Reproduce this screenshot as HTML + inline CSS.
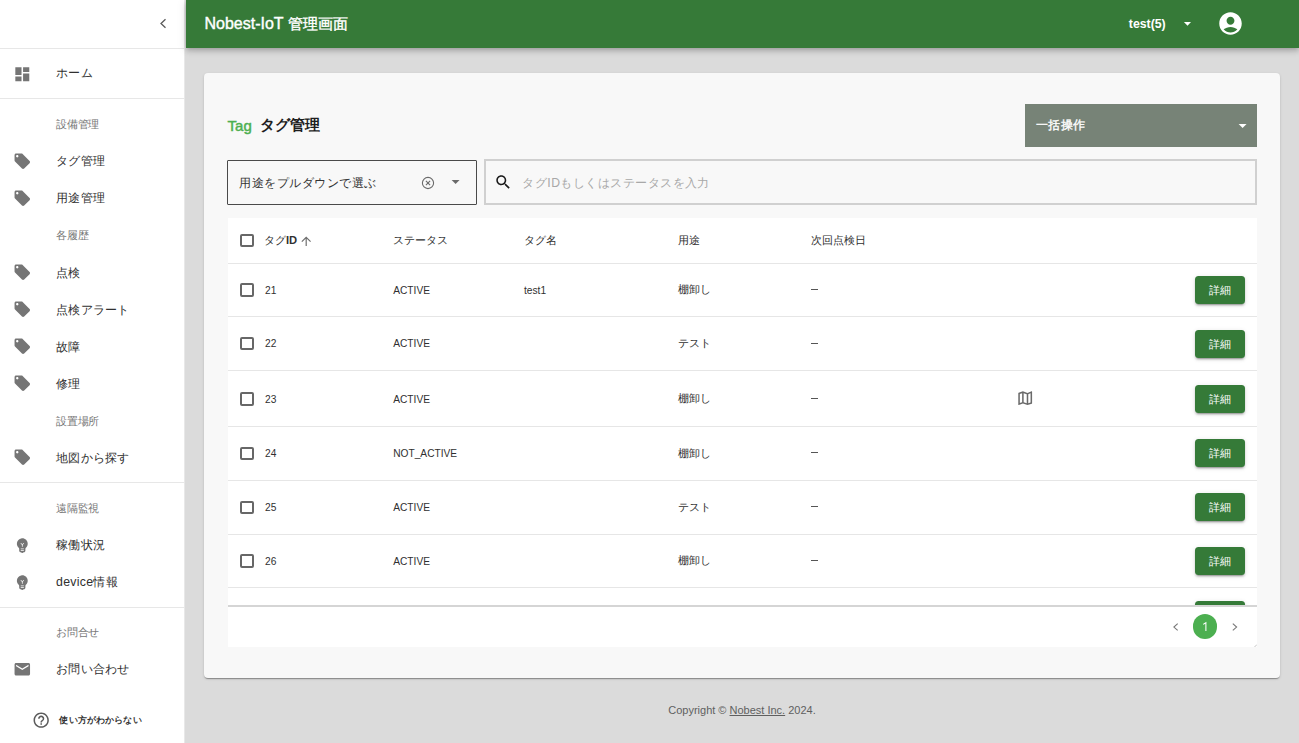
<!DOCTYPE html>
<html><head><meta charset="utf-8">
<style>
*{box-sizing:border-box;margin:0;padding:0}
html,body{width:1299px;height:743px;overflow:hidden}
body{background:#dbdbdb;font-family:"Liberation Sans",sans-serif;position:relative;color:#222}
div,span,svg{position:absolute}
svg{display:block}
#side{left:0;top:0;width:185.3px;height:743px;background:#fff;border-right:0.6px solid #e8e8e8}
.hr{left:0;width:185px;height:1px;background:#e7e7e7}
.it{left:56px;font-size:12.3px;letter-spacing:0.3px;line-height:16px;height:16px;white-space:nowrap;color:#303030}
.sub{left:56.3px;font-size:11.2px;letter-spacing:-0.3px;line-height:14px;height:14px;white-space:nowrap;color:#777}
.ico{left:12.8px;width:18.6px;height:18.6px;fill:#757575}
#hdr{left:185.6px;top:0;width:1113.4px;height:48px;background:#367a38;box-shadow:0 2px 4px -1px rgba(0,0,0,.16),0 4px 5px 0 rgba(0,0,0,.1),0 1px 10px 0 rgba(0,0,0,.1)}
#card{left:204px;top:73px;width:1076px;height:605px;background:#f8f8f8;border-radius:4px;box-shadow:0 2px 1px -1px rgba(0,0,0,.2),0 1px 1px 0 rgba(0,0,0,.14),0 1px 3px 0 rgba(0,0,0,.12)}
#tbl{left:227.7px;top:218px;width:1029.3px;height:428.7px;background:#fff;overflow:hidden}
.th{font-size:11.2px;line-height:14px;height:14px;white-space:nowrap;color:#303030}
.l{font-size:10.2px !important}
.td{font-size:11.2px;line-height:14px;height:14px;white-space:nowrap;color:#303030}
.rl{left:0;width:1029px;height:1px;background:#e6e6e6}
.cb{width:13.6px;height:13.6px;border:2px solid #676767;border-radius:2px}
.btn{left:967.3px;width:50px;height:28px;background:#357a38;border-radius:3.5px;box-shadow:0 3px 1px -2px rgba(0,0,0,.2),0 2px 2px 0 rgba(0,0,0,.14),0 1px 5px 0 rgba(0,0,0,.12);color:#fff;font-size:10.8px;line-height:28px;text-align:center}
</style></head><body>

<!-- Sidebar -->
<div id="side">
  <svg style="left:159px;top:18px;width:9px;height:11px" viewBox="0 0 9 11"><polyline points="6.5,1.2 2,5.5 6.5,9.8" fill="none" stroke="#5a5a5a" stroke-width="1.3"/></svg>
  <div class="hr" style="top:48px"></div>
  <svg class="ico" style="top:64.7px" viewBox="0 0 24 24"><path d="M3 13h8V3H3v10zm0 8h8v-6H3v6zm10 0h8V11h-8v10zm0-18v6h8V3h-8z"/></svg>
  <div class="it" style="top:65.3px">ホーム</div>
  <div class="hr" style="top:98.2px"></div>

  <div class="sub" style="top:116.5px">設備管理</div>
  <svg class="ico" style="top:152px" viewBox="0 0 24 24"><path d="M21.41 11.58l-9-9C12.05 2.22 11.55 2 11 2H4c-1.1 0-2 .9-2 2v7c0 .55.22 1.05.59 1.42l9 9c.36.36.86.58 1.41.58.55 0 1.05-.22 1.41-.59l7-7c.37-.36.59-.86.59-1.41 0-.55-.23-1.06-.59-1.42zM5.5 7C4.67 7 4 6.33 4 5.5S4.67 4 5.5 4 7 4.67 7 5.5 6.33 7 5.5 7z"/></svg>
  <div class="it" style="top:152.9px">タグ管理</div>
  <svg class="ico" style="top:188.6px" viewBox="0 0 24 24"><path d="M21.41 11.58l-9-9C12.050 2.22 11.55 2 11 2H4c-1.1 0-2 .9-2 2v7c0 .55.22 1.05.59 1.42l9 9c.36.36.86.58 1.41.58.55 0 1.05-.22 1.41-.59l7-7c.37-.36.59-.86.59-1.41 0-.55-.23-1.060-.59-1.42zM5.5 7C4.67 7 4 6.33 4 5.5S4.67 4 5.5 4 7 4.670 7 5.5 6.33 7 5.5 7z"/></svg>
  <div class="it" style="top:190.1px">用途管理</div>

  <div class="sub" style="top:228.2px">各履歴</div>
  <svg class="ico" style="top:262.8px" viewBox="0 0 24 24"><path d="M21.41 11.58l-9-9C12.05 2.22 11.55 2 11 2H4c-1.1 0-2 .9-2 2v7c0 .55.22 1.05.59 1.42l9 9c.36.36.86.58 1.41.58.55 0 1.05-.22 1.41-.59l7-7c.37-.36.59-.86.59-1.41 0-.55-.23-1.06-.59-1.42zM5.5 7C4.67 7 4 6.33 4 5.5S4.67 4 5.5 4 7 4.67 7 5.5 6.33 7 5.5 7z"/></svg>
  <div class="it" style="top:264.5px">点検</div>
  <svg class="ico" style="top:299.9px" viewBox="0 0 24 24"><path d="M21.41 11.58l-9-9C12.05 2.22 11.55 2 11 2H4c-1.1 0-2 .9-2 2v7c0 .55.22 1.05.59 1.42l9 9c.36.36.86.58 1.41.58.55 0 1.05-.22 1.41-.59l7-7c.37-.36.59-.86.59-1.41 0-.55-.23-1.06-.59-1.42zM5.5 7C4.67 7 4 6.33 4 5.5S4.67 4 5.5 4 7 4.67 7 5.5 6.33 7 5.5 7z"/></svg>
  <div class="it" style="top:301.5px">点検アラート</div>
  <svg class="ico" style="top:337px" viewBox="0 0 24 24"><path d="M21.41 11.58l-9-9C12.05 2.22 11.55 2 11 2H4c-1.1 0-2 .9-2 2v7c0 .55.22 1.05.59 1.42l9 9c.36.36.86.58 1.41.58.55 0 1.05-.22 1.41-.59l7-7c.37-.36.59-.86.59-1.41 0-.55-.23-1.06-.59-1.42zM5.5 7C4.67 7 4 6.33 4 5.5S4.67 4 5.5 4 7 4.67 7 5.5 6.33 7 5.5 7z"/></svg>
  <div class="it" style="top:338.7px">故障</div>
  <svg class="ico" style="top:374px" viewBox="0 0 24 24"><path d="M21.41 11.58l-9-9C12.05 2.22 11.55 2 11 2H4c-1.1 0-2 .9-2 2v7c0 .55.22 1.05.59 1.42l9 9c.36.36.86.58 1.41.58.55 0 1.05-.22 1.41-.59l7-7c.37-.36.59-.86.59-1.41 0-.55-.23-1.06-.59-1.42zM5.5 7C4.67 7 4 6.33 4 5.5S4.67 4 5.5 4 7 4.67 7 5.5 6.33 7 5.5 7z"/></svg>
  <div class="it" style="top:375.6px">修理</div>

  <div class="sub" style="top:413.5px">設置場所</div>
  <svg class="ico" style="top:448px" viewBox="0 0 24 24"><path d="M21.41 11.58l-9-9C12.05 2.22 11.55 2 11 2H4c-1.1 0-2 .9-2 2v7c0 .55.22 1.05.59 1.42l9 9c.36.36.86.58 1.41.58.55 0 1.05-.22 1.41-.59l7-7c.37-.36.59-.86.59-1.41 0-.55-.23-1.06-.59-1.42zM5.5 7C4.67 7 4 6.33 4 5.5S4.67 4 5.5 4 7 4.67 7 5.5 6.33 7 5.5 7z"/></svg>
  <div class="it" style="top:449.6px">地図から探す</div>
  <div class="hr" style="top:482px"></div>

  <div class="sub" style="top:500.9px">遠隔監視</div>
  <svg class="ico" style="top:535.6px" viewBox="0 0 24 24"><path d="M12 3c-.46 0-.93.04-1.4.14-2.76.53-4.96 2.76-5.48 5.52-.48 2.61.48 5.01 2.22 6.56.43.38.66.91.66 1.47V19c0 1.1.9 2 2 2h.28c.35.6.98 1 1.72 1s1.38-.4 1.72-1H14c1.1 0 2-.9 2-2v-2.31c0-.55.22-1.09.64-1.46C18.090 13.95 19 12.08 19 10c0-3.87-3.13-7-7-7zm2 16h-4v-1h4v1zm0-2h-4v-1h4v1zm-1.5-5.59V14h-1v-2.59L9.67 9.59l.71-.71L12 10.5l1.62-1.62.71.71-1.83 1.82z"/></svg>
  <div class="it" style="top:537px">稼働状況</div>
  <svg class="ico" style="top:572.7px" viewBox="0 0 24 24"><path d="M12 3c-.46 0-.93.04-1.4.14-2.76.53-4.96 2.76-5.48 5.52-.48 2.61.48 5.01 2.22 6.56.43.38.66.91.66 1.47V19c0 1.1.9 2 2 2h.28c.35.6.98 1 1.72 1s1.38-.4 1.72-1H14c1.1 0 2-.9 2-2v-2.31c0-.55.22-1.09.64-1.46C18.09 13.95 19 12.08 19 10c0-3.87-3.13-7-7-7zm2 16h-4v-1h4v1zm0-2h-4v-1h4v1zm-1.5-5.590V14h-1v-2.59L9.67 9.59l.71-.71L12 10.5l1.62-1.62.71.71-1.83 1.82z"/></svg>
  <div class="it" style="top:574.1px">device情報</div>
  <div class="hr" style="top:606.6px"></div>

  <div class="sub" style="top:625.0px">お問合せ</div>
  <svg class="ico" style="top:659.8px" viewBox="0 0 24 24"><path d="M20 4H4c-1.1 0-1.99.9-1.99 2L2 18c0 1.1.9 2 2 2h16c1.1 0 2-.9 2-2V6c0-1.1-.9-2-2-2zm0 4l-8 5-8-5V6l8 5 8-5v2z"/></svg>
  <div class="it" style="top:660.7px">お問い合わせ</div>

  <svg style="left:31.6px;top:711px;width:18.4px;height:18.4px;fill:#5c5c5c" viewBox="0 0 24 24"><path d="M11 18h2v-2h-2v2zm1-16C6.48 2 2 6.48 2 12s4.48 10 10 10 10-4.48 10-10S17.52 2 12 2zm0 18c-4.41 0-8-3.59-8-8s3.59-8 8-8 8 3.59 8 8-3.59 8-8 8zm0-14c-2.21 0-4 1.79-4 4h2c0-1.1.9-2 2-2s2 .9 2 2c0 2-3 1.75-3 5h2c0-2.25 3-2.5 3-5 0-2.21-1.79-4-4-4z"/></svg>
  <div style="left:59.4px;top:714.3px;letter-spacing:0.15px;font-size:8.8px;line-height:12px;font-weight:bold;color:#333;white-space:nowrap">使い方がわからない</div>
</div>

<!-- Header -->
<div id="hdr">
  <div style="left:18.9px;top:14px;font-size:16px;line-height:20px;color:#fff;white-space:nowrap;-webkit-text-stroke:0.4px #fff">Nobest-IoT <span style="position:static;font-size:15.2px">管理画面</span></div>
  <div style="left:943.2px;top:16.3px;font-size:12.3px;line-height:16px;font-weight:bold;color:#fff;white-space:nowrap">test(5)</div>
  <svg style="left:993.2px;top:14.9px;width:17px;height:17px;fill:#fff" viewBox="0 0 24 24"><path d="M7 10l5 5 5-5z"/></svg>
  <svg style="left:1031.5px;top:9.8px;width:27px;height:27px;fill:#fff" viewBox="0 0 24 24"><path d="M12 2C6.48 2 2 6.48 2 12s4.48 10 10 10 10-4.48 10-10S17.52 2 12 2zm0 4c1.93 0 3.5 1.57 3.5 3.5S13.93 13 12 13s-3.5-1.570-3.5-3.5S10.07 6 12 6zm0 14c-2.03 0-4.43-.82-6.14-2.88C7.55 15.8 9.68 15 12 15s4.45.8 6.14 2.12C16.43 19.18 14.03 20 12 20z"/></svg>
</div>

<!-- Card -->
<div id="card">
  <div style="left:23.6px;top:43.2px;font-size:15px;line-height:20px;color:#4caf50;white-space:nowrap;-webkit-text-stroke:0.45px #4caf50">Tag</div>
  <div style="left:56px;top:42px;font-size:15px;line-height:20px;font-weight:bold;color:#1e1e1e;white-space:nowrap">タグ管理</div>

  <div style="left:821px;top:31px;width:232px;height:43px;background:#778377">
    <div style="left:10.6px;top:13px;font-size:12.4px;letter-spacing:0.5px;line-height:16px;color:#fff;white-space:nowrap;-webkit-text-stroke:0.35px #fff">一括操作</div>
    <svg style="left:207.5px;top:12px;width:19.2px;height:19.2px;fill:#fff" viewBox="0 0 24 24"><path d="M7 10l5 5 5-5z"/></svg>
  </div>

  <div style="left:23px;top:86.9px;width:249.5px;height:45px;border:1.3px solid #4a4a4a;border-radius:1px">
    <div style="left:11px;top:13.7px;font-size:12.2px;letter-spacing:0.55px;line-height:16px;color:#333;white-space:nowrap">用途をプルダウンで選ぶ</div>
    <svg style="left:192px;top:14.2px;width:16px;height:16px" viewBox="0 0 16 16"><circle cx="8" cy="8" r="5.6" fill="none" stroke="#6a6a6a" stroke-width="1.1"/><path d="M5.9 5.9l4.2 4.2M10.1 5.9l-4.2 4.2" stroke="#6a6a6a" stroke-width="1.1"/></svg>
    <svg style="left:218.3px;top:11.6px;width:19.2px;height:19.2px;fill:#6a6a6a" viewBox="0 0 24 24"><path d="M7 10l5 5 5-5z"/></svg>
  </div>

  <div style="left:280px;top:85.8px;width:773px;height:46.7px;border:2px solid #d0d0d0">
    <svg style="left:7.5px;top:12.7px;width:18.4px;height:18.4px;fill:#1a1a1a" viewBox="0 0 24 24"><path d="M15.5 14h-.79l-.28-.27C15.41 12.59 16 11.11 16 9.5 16 5.91 13.09 3 9.5 3S3 5.91 3 9.5 5.91 16 9.5 16c1.61 0 3.09-.59 4.23-1.57l.27.28v.79l5 4.99L20.49 19l-4.99-5zm-6 0C7.01 14 5 11.99 5 9.5S7.01 5 9.5 5 14 7.01 14 9.5 11.99 14 9.5 14z"/></svg>
    <div style="left:36.4px;top:13.8px;font-size:12.2px;letter-spacing:0.46px;line-height:16px;color:#a8a8a8;white-space:nowrap">タグIDもしくはステータスを入力</div>
  </div>
</div>

<!-- Table -->
<div id="tbl">
  <div class="cb" style="left:12.3px;top:15.5px"></div>
  <div class="th" style="left:36.2px;top:14.8px">タグ<b>ID</b></div>
  <svg style="left:71.6px;top:16.2px;width:14.4px;height:14.4px;fill:#6f6f6f" viewBox="0 0 24 24"><path d="M4 12l1.41 1.41L11 7.830V20h2V7.83l5.58 5.59L20 12l-8-8-8 8z"/></svg>
  <div class="th" style="left:165.7px;top:14.8px">ステータス</div>
  <div class="th" style="left:296.4px;top:14.8px">タグ名</div>
  <div class="th" style="left:450.8px;top:14.8px">用途</div>
  <div class="th" style="left:583.4px;top:14.8px">次回点検日</div>
  <div class="rl" style="top:44.6px"></div>

  <!--ROWS-->
<div class="cb" style="left:12.3px;top:65.0px"></div>
<div class="td l" style="left:37.3px;top:65.5px">21</div>
<div class="td l" style="left:165.5px;top:65.5px">ACTIVE</div>
<div class="td l" style="left:296.3px;top:65.5px">test1</div>
<div class="td" style="left:450.8px;top:64.0px">棚卸し</div>
<div style="left:583.7px;top:71px;width:7px;height:1px;background:#555"></div>
<div class="btn" style="top:57.6px">詳細</div>
<div class="cb" style="left:12.3px;top:118.9px"></div>
<div class="td l" style="left:37.3px;top:119.4px">22</div>
<div class="td l" style="left:165.5px;top:119.4px">ACTIVE</div>
<div class="td" style="left:450.8px;top:117.9px">テスト</div>
<div style="left:583.7px;top:125px;width:7px;height:1px;background:#555"></div>
<div class="btn" style="top:111.5px">詳細</div>
<div class="cb" style="left:12.3px;top:174.0px"></div>
<div class="td l" style="left:37.3px;top:174.5px">23</div>
<div class="td l" style="left:165.5px;top:174.5px">ACTIVE</div>
<div class="td" style="left:450.8px;top:173.0px">棚卸し</div>
<div style="left:583.7px;top:180px;width:7px;height:1px;background:#555"></div>
<svg style="left:788.3px;top:170.8px;width:18.4px;height:18.4px;fill:#6a6a6a" viewBox="0 0 24 24"><path d="m20.5 3-.16.03L15 5.1 9 3 3.36 4.9c-.21.07-.36.25-.36.48V20.5c0 .28.22.5.5.5l.16-.03L9 18.9l6 2.1 5.64-1.9c.21-.07.36-.25.36-.48V3.5c0-.28-.22-.5-.5-.5zM10 5.47l4 1.4v11.66l-4-1.4V5.47zm-5 .99 3-1.01v11.7l-3 1.16V6.46zm14 11.08-3 1.01V6.86l3-1.16v11.84z"/></svg>
<div class="btn" style="top:166.6px">詳細</div>
<div class="cb" style="left:12.3px;top:228.8px"></div>
<div class="td l" style="left:37.3px;top:229.3px">24</div>
<div class="td l" style="left:165.5px;top:229.3px">NOT_ACTIVE</div>
<div class="td" style="left:450.8px;top:227.8px">棚卸し</div>
<div style="left:583.7px;top:234px;width:7px;height:1px;background:#555"></div>
<div class="btn" style="top:221.4px">詳細</div>
<div class="cb" style="left:12.3px;top:282.6px"></div>
<div class="td l" style="left:37.3px;top:283.1px">25</div>
<div class="td l" style="left:165.5px;top:283.1px">ACTIVE</div>
<div class="td" style="left:450.8px;top:281.6px">テスト</div>
<div style="left:583.7px;top:288px;width:7px;height:1px;background:#555"></div>
<div class="btn" style="top:275.2px">詳細</div>
<div class="cb" style="left:12.3px;top:336.4px"></div>
<div class="td l" style="left:37.3px;top:336.9px">26</div>
<div class="td l" style="left:165.5px;top:336.9px">ACTIVE</div>
<div class="td" style="left:450.8px;top:335.4px">棚卸し</div>
<div style="left:583.7px;top:342px;width:7px;height:1px;background:#555"></div>
<div class="btn" style="top:329.0px">詳細</div>
<div class="rl" style="top:97.8px"></div>
<div class="rl" style="top:152.2px"></div>
<div class="rl" style="top:208.0px"></div>
<div class="rl" style="top:261.9px"></div>
<div class="rl" style="top:315.5px"></div>
<div class="rl" style="top:368.9px"></div>
<div class="btn" style="top:382.5px">詳細</div>
<div style="left:0;top:387.0px;width:1029px;height:41.5px;background:#fff;border-top:2px solid #d5d5d5"></div>
<svg style="left:1026px;top:425.5px;width:3px;height:3px" viewBox="0 0 3 3"><path d="M3 0.5 L0.5 3" stroke="#c4c4c4" stroke-width="1"/></svg>
<svg style="left:942px;top:398.5px;width:12px;height:20px" viewBox="0 0 12 20"><polyline points="7.7,6.7 3.9,10.05 7.7,13.4" fill="none" stroke="#777" stroke-width="1.1"/></svg>
<div style="left:965px;top:396.20000000000005px;width:24.6px;height:24.6px;border-radius:50%;background:#4caf50"><svg style="left:0;top:0;width:24.6px;height:24.6px" viewBox="0 0 24.6 24.6"><path d="M10.2 10.4 L12.9 8.7 V17.1" fill="none" stroke="#fff" stroke-width="1.05"/></svg></div>
<svg style="left:1001px;top:398.5px;width:12px;height:20px" viewBox="0 0 12 20"><polyline points="3.8,6.7 7.6,10.05 3.8,13.4" fill="none" stroke="#777" stroke-width="1.1"/></svg>
<!--/ROWS-->
</div>

<!-- Footer -->
<div style="left:185px;top:703px;width:1114px;text-align:center;font-size:11px;line-height:14px;color:#5f5f5f;white-space:nowrap">Copyright © <u>Nobest Inc.</u> 2024.</div>
</body></html>
